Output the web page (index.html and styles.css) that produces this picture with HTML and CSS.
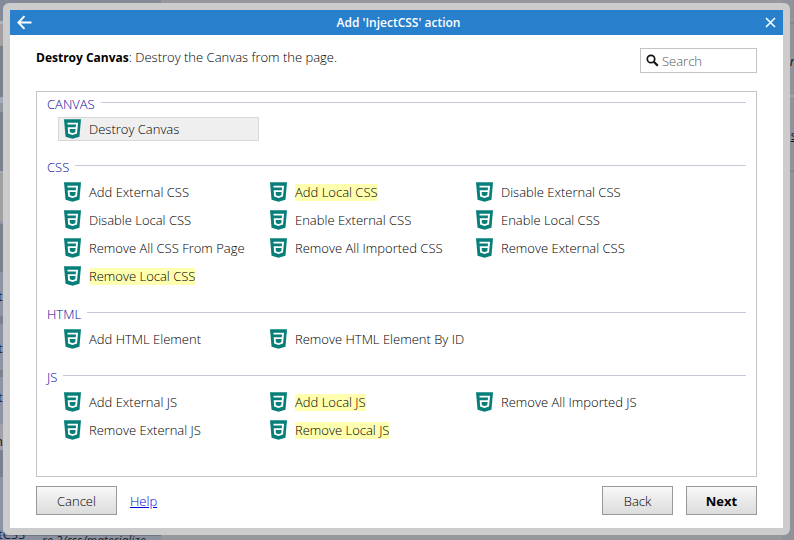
FILE: index.html
```html
<!DOCTYPE html>
<html lang="en">
<head>
<meta charset="utf-8">
<title>Add 'InjectCSS' action</title>
<link rel="stylesheet" href="styles.css">
</head>
<body>
<svg class="defs" aria-hidden="true">
  <symbol id="shield" viewBox="1.5 0 21 24"><path d="M1.500 0h21l-1.910 21.563L11.977 24l-8.565-2.438z" fill="#077f78"/><path d="M5.800 5.300H17.600L16.500 16.800L12 18.200L7.700 16.800L7.300 11H16.900" fill="none" stroke="#fff" stroke-width="2.300"/></symbol>
</svg>
<div class="backdrop" aria-hidden="true">
  <span class="scrap s1">t</span><span class="scrap s2">t</span><span class="scrap s3">t</span><span class="scrap s4">n</span>
  <span class="scrap s5">tCSS</span><span class="scrap s6">re.2/css/materialize.</span>
  <span class="scrap s7">r</span><span class="scrap s8">s</span>
</div>
<div class="dialog" role="dialog" aria-labelledby="title">
  <header class="titlebar">
    <button class="tool" aria-label="Go back"><svg width="15" height="15" viewBox="0 0 15 15"><path d="M14.500 7.500H1.500M7.500 1.200L1.400 7.500l6.100 6.300" fill="none" stroke="#fff" stroke-width="1.900"/></svg></button>
    <h1 id="title">Add 'InjectCSS' action</h1>
    <button class="tool" aria-label="Close"><svg width="11" height="11" viewBox="0 0 11 11"><path d="M1 1l9 9M10 1l-9 9" stroke="#fff" stroke-width="1.600"/></svg></button>
  </header>
  <main class="content">
    <div class="intro">
      <p><b>Destroy Canvas</b>: Destroy the Canvas from the page.</p>
      <label class="search"><svg width="13" height="13" viewBox="0 0 13 13"><circle cx="5" cy="5" r="3.700" fill="none" stroke="#111" stroke-width="1.700"/><path d="M7.800 7.800l4 4" stroke="#111" stroke-width="2.200"/></svg><input type="search" placeholder="Search" aria-label="Search"></label>
    </div>
    <div class="panel">
      <section>
        <h2>CANVAS</h2>
        <div class="items">
          <button class="item selected"><svg><use href="#shield"/></svg><span>Destroy Canvas</span></button>
        </div>
      </section>
      <section>
        <h2>CSS</h2>
        <div class="items">
          <button class="item"><svg><use href="#shield"/></svg><span>Add External CSS</span></button>
          <button class="item"><svg><use href="#shield"/></svg><mark>Add Local CSS</mark></button>
          <button class="item"><svg><use href="#shield"/></svg><span>Disable External CSS</span></button>
          <button class="item"><svg><use href="#shield"/></svg><span>Disable Local CSS</span></button>
          <button class="item"><svg><use href="#shield"/></svg><span>Enable External CSS</span></button>
          <button class="item"><svg><use href="#shield"/></svg><span>Enable Local CSS</span></button>
          <button class="item"><svg><use href="#shield"/></svg><span>Remove All CSS From Page</span></button>
          <button class="item"><svg><use href="#shield"/></svg><span>Remove All Imported CSS</span></button>
          <button class="item"><svg><use href="#shield"/></svg><span>Remove External CSS</span></button>
          <button class="item"><svg><use href="#shield"/></svg><mark>Remove Local CSS</mark></button>
        </div>
      </section>
      <section>
        <h2>HTML</h2>
        <div class="items">
          <button class="item"><svg><use href="#shield"/></svg><span>Add HTML Element</span></button>
          <button class="item"><svg><use href="#shield"/></svg><span>Remove HTML Element By ID</span></button>
        </div>
      </section>
      <section>
        <h2>JS</h2>
        <div class="items">
          <button class="item"><svg><use href="#shield"/></svg><span>Add External JS</span></button>
          <button class="item"><svg><use href="#shield"/></svg><mark>Add Local JS</mark></button>
          <button class="item"><svg><use href="#shield"/></svg><span>Remove All Imported JS</span></button>
          <button class="item"><svg><use href="#shield"/></svg><span>Remove External JS</span></button>
          <button class="item"><svg><use href="#shield"/></svg><mark>Remove Local JS</mark></button>
        </div>
      </section>
    </div>
    <footer class="actions">
      <button class="btn wide">Cancel</button>
      <a href="#help">Help</a>
      <span class="spacer"></span>
      <button class="btn">Back</button>
      <button class="btn primary">Next</button>
    </footer>
  </main>
</div>
</body>
</html>
```
FILE: styles.css
```css
* { box-sizing: border-box; }
body {
  margin: 0;
  height: 100vh;
  padding: 3px 4px 5px 3px;
  display: flex;
  background: #9b9ca1;
  color: #000;
  font: 350 13px/18px "Open Sans", "Noto Sans", sans-serif;
}
button, input { font: inherit; color: inherit; }
.defs { position: absolute; width: 0; height: 0; }

/* Dimmed page behind the dialog */
.backdrop {
  position: fixed;
  inset: 0;
  overflow: hidden;
  background:
    linear-gradient(#858a99, #858a99) 0 0 / 161px 3px no-repeat,
    linear-gradient(#6f7687 0 1px, #8b909f 1px) 0 535px / 161px 5px no-repeat,
    linear-gradient(#858a99 0 21px, #b0b2ba 21px 24px, #a59fa2 24px 46px, #7b808d 46px 97px, #a4a9b8 97px 103px, #9296a0 103px 112px, #7b808d 112px 171px, #a4a9b8 171px 173px, #a29fa1 173px 221px, #9296a3 221px 224px, #7b808d 224px 272px, #8d93a5 272px 316px, #7e818b 316px 324px, #8d93a5 324px 370px, #7e818b 370px 377px, #8d93a5 377px 424px, #a19fab 424px 450px, #7b8090 450px 477px, #8d93a3 477px) 0 0 / 36px 100% no-repeat,
    linear-gradient(#91929b 0 22px, #85868f 22px 24px, #92929d 24px 95px, #a2a2ac 95px 97px, #92929d 97px 170px, #85868f 170px 172px, #92929d 172px) 100% 0 / 12px 100% no-repeat,
    #97989c;
}
.scrap { position: absolute; color: #1c2340; font-weight: 400; white-space: nowrap; }
.s1 { left: -2px; top: 287px; }
.s2 { left: -2px; top: 339px; }
.s3 { left: -2px; top: 388px; }
.s4 { left: -5px; top: 432px; color: #111; }
.s5 { left: -2px; top: 525px; }
.s6 { left: 42px; top: 532px; color: #222; font-size: 12px; font-style: italic; }
.s7 { right: -1px; top: 52px; color: #111; font-style: italic; }
.s8 { right: -3px; top: 126px; color: #111; text-decoration: underline; }

.dialog {
  position: relative;
  flex: 1;
  display: flex;
  flex-direction: column;
  border: 7px solid #ccc;
  border-radius: 6px;
  background: #fff;
}
.titlebar {
  display: flex;
  align-items: center;
  justify-content: space-between;
  height: 25px;
  padding: 0 7px;
  background: #2880cd;
  color: #fff;
}
.titlebar h1 { margin: 0; font-size: 12px; font-weight: 600; }
.tool { display: flex; padding: 0; border: 0; background: none; }

.content { flex: 1; display: flex; flex-direction: column; padding: 13px 26px; }
.intro { display: flex; justify-content: space-between; margin-bottom: 18px; }
.intro p { margin: 0; }
.intro b { font-weight: 700; font-size: 12px; }
.search {
  display: flex;
  align-items: center;
  gap: 3px;
  width: 117px;
  height: 25px;
  padding: 0 5px;
  border: 1px solid #c4c4c8;
}
.search svg { flex: none; }
.search input { min-width: 0; flex: 1; padding: 0; border: 0; outline: 0; background: none; }
.search input::placeholder { color: #555; }

.panel { flex: 1; padding: 0 10px; border: 1px solid #c4c4c8; }
section { margin-bottom: 14px; }
h2 {
  display: flex;
  align-items: center;
  gap: 6px;
  margin: 0 0 1px;
  font-size: 13px;
  line-height: 24px;
  font-weight: 350;
  color: #0808a0;
}
h2::after { content: ""; flex: 1; height: 1px; margin-bottom: 4px; background: #c8c8dc; }
.items {
  display: grid;
  grid-template-columns: repeat(3, 201px);
  gap: 4px 5px;
  padding-left: 11px;
}
.item {
  display: flex;
  align-items: center;
  gap: 8px;
  height: 24px;
  padding: 0 5px;
  border: 1px solid transparent;
  background: none;
  white-space: nowrap;
}
.item svg { flex: none; width: 17px; height: 20px; }
.item mark { background: #ffffb0; color: inherit; line-height: 17px; }
.selected { border-color: #d8d8d8; background: #efefef; }

.actions { display: flex; align-items: center; gap: 13px; margin-top: 9px; }
.btn {
  width: 71px;
  height: 29px;
  padding: 0;
  border: 1px solid #999;
  background: linear-gradient(#f8f8f8, #dcdcdc);
}
.wide { width: 81px; }
.primary { font-weight: 700; }
.spacer { flex: 1; }
.actions a { color: #00d; }
```
